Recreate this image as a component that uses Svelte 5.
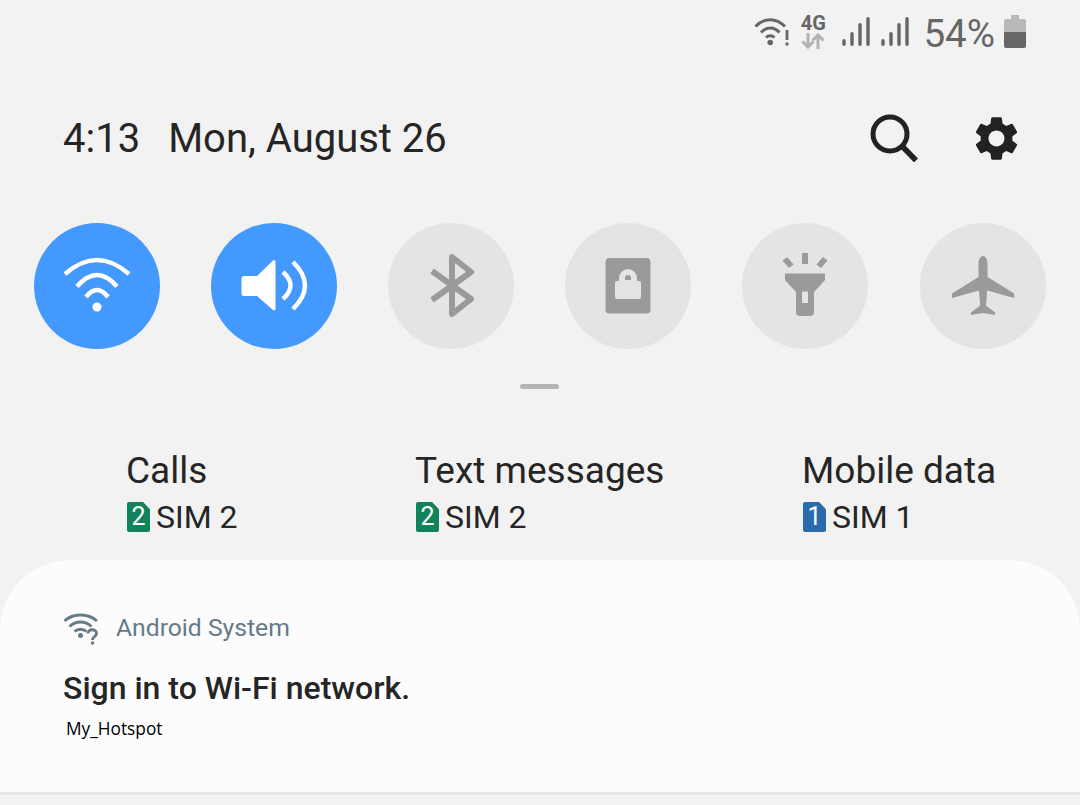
<script>
  const sims = [
    { label: 'Calls', num: 2, color: 'green' },
    { label: 'Text messages', num: 2, color: 'green' },
    { label: 'Mobile data', num: 1, color: 'blue' }
  ];
</script>

<div class="shade">
  <div class="status">
    <svg class="st-wifi" width="36" height="32" viewBox="0 0 36 32">
      <g fill="none" stroke="#666" stroke-width="3">
        <path d="M1.500 11.500C10 2.500 22 2.500 31 11.500" />
        <path d="M7 17.500C12.500 11.500 20 11.500 25.500 17.500" />
        <path d="M12 22.500C14.500 20 18 20 20.500 22.500" />
      </g>
      <circle cx="16.200" cy="27.500" r="2.800" fill="#666" />
      <path d="M33 15v10" stroke="#666" stroke-width="2.800" />
      <circle cx="33" cy="29" r="1.700" fill="#666" />
    </svg>
    <div class="st-net">
      <span>4G</span>
      <svg width="24" height="16" viewBox="0 0 24 16">
        <g fill="none" stroke="#b2b2b2" stroke-width="3">
          <path d="M7 0v14M1.500 8.500L7 14l5.500-5.500" />
          <path d="M17 16V2M11.500 7.500L17 2l5.500 5.500" />
        </g>
      </svg>
    </div>
    <div class="st-bars">
      {#each [0, 1] as s (s)}
        <svg width="28" height="32" viewBox="0 0 28 32">
          <g fill="none" stroke="#666" stroke-width="3.400" stroke-linecap="round">
            <path d="M2 25.700v3.600" />
            <path d="M10 18.700v10.600" />
            <path d="M18 9.700v19.600" />
            <path d="M26 3.700v25.600" />
          </g>
        </svg>
      {/each}
    </div>
    <span class="st-pct">54%</span>
    <svg class="st-batt" width="22" height="33" viewBox="0 0 22 33">
      <path d="M7 0h8v4h5a2 2 0 0 1 2 2v11H0V6a2 2 0 0 1 2-2h5z" fill="#b9b9b9" />
      <path d="M0 17h22v14a2 2 0 0 1-2 2H2a2 2 0 0 1-2-2z" fill="#666" />
    </svg>
  </div>

  <div class="head">
    <div class="when"><span class="time">4:13</span><span>Mon, August 26</span></div>
    <svg class="search" width="48" height="48" viewBox="0 0 48 48">
      <circle cx="20" cy="20" r="17" fill="none" stroke="#222" stroke-width="5" />
      <path d="M32 32l14 14.500" fill="none" stroke="#222" stroke-width="5.500" />
    </svg>
    <svg class="gear" width="53" height="53" viewBox="0 0 24 24">
      <path fill="#222" fill-rule="evenodd" d="M19.140 12.940c.04-.3.06-.61.06-.94 0-.32-.02-.64-.07-.94l2.030-1.580c.18-.14.23-.41.12-.61l-1.920-3.320c-.12-.22-.37-.29-.59-.22l-2.390.96c-.5-.38-1.030-.7-1.620-.94l-.36-2.540c-.04-.24-.24-.41-.48-.41h-3.840c-.24 0-.43.17-.47.41l-.36 2.540c-.59.24-1.130.57-1.620.94l-2.390-.96c-.22-.08-.47 0-.59.22L2.740 8.870c-.12.21-.08.47.12.61l2.030 1.580c-.05.3-.09.63-.09.94s.02.64.07.94l-2.030 1.580c-.18.14-.23.41-.12.61l1.920 3.320c.12.22.37.29.59.22l2.390-.96c.5.38 1.030.7 1.620.94l.36 2.540c.05.24.24.41.48.41h3.840c.24 0 .44-.17.47-.41l.36-2.540c.59-.24 1.130-.56 1.620-.94l2.390.96c.22.08.47 0 .59-.22l1.920-3.320c.12-.22.07-.47-.12-.61l-2.010-1.580zM12 15.600c-1.980 0-3.600-1.620-3.600-3.600s1.620-3.600 3.600-3.600 3.600 1.620 3.600 3.600-1.620 3.600-3.600 3.600z" />
    </svg>
  </div>

  <div class="toggles">
    <div class="tog on">
      <svg viewBox="0 0 126 126">
        <g fill="none" stroke="#fff" stroke-width="4.500">
          <path d="M31 51Q63 23 95 51" />
          <path d="M43 63.500Q63 40.500 83 63.500" />
          <path d="M52 74Q63 60 74 74" />
        </g>
        <circle cx="63" cy="84" r="4.500" fill="#fff" />
      </svg>
    </div>
    <div class="tog on">
      <svg viewBox="0 0 126 126">
        <path d="M33 53h13L62 37.500a1.500 1.500 0 0 1 2.500 1v47.500a1.500 1.500 0 0 1-2.500 1L46 73H33a2.500 2.500 0 0 1-2.500-2.500v-15A2.500 2.500 0 0 1 33 53z" fill="#fff" />
        <g fill="none" stroke="#fff" stroke-width="4.500">
          <path d="M72 49Q87 62.500 72 76" />
          <path d="M82 39Q106 62.500 82 86" />
        </g>
      </svg>
    </div>
    <div class="tog">
      <svg viewBox="0 0 126 126">
        <path d="M44 48L83 76 64 91V34L83 49 44 77" fill="none" stroke="#9a9a9a" stroke-width="6" stroke-linejoin="round" />
      </svg>
    </div>
    <div class="tog">
      <svg viewBox="0 0 126 126">
        <rect x="40.500" y="35" width="45" height="55.500" rx="4" fill="#9a9a9a" />
        <path d="M50 60a2 2 0 0 1 2-2h2v-3a9 9 0 0 1 18 0v3h2a2 2 0 0 1 2 2v14a2 2 0 0 1-2 2H52a2 2 0 0 1-2-2z" fill="#e4e4e4" />
        <path d="M60 57v-2a3 3 0 0 1 6 0v2z" fill="#9a9a9a" />
      </svg>
    </div>
    <div class="tog">
      <svg viewBox="0 0 126 126">
        <path d="M60 30h6v11h-6zM40.500 37.500l4.500-3.500 6.500 7.500-4.500 3.500zM85.500 37.500L81 34l-6.500 7.500 4.500 3.500z" fill="#9a9a9a" />
        <path fill-rule="evenodd" d="M43 50.500h40V57L72 69v20a4 4 0 0 1-4 4H58a4 4 0 0 1-4-4V69L43 57zM60 68.500v11.500h6V68.500z" fill="#9a9a9a" />
      </svg>
    </div>
    <div class="tog">
      <svg viewBox="0 0 126 126">
        <path d="M63 33c-2.800 0-4.500 4-4.500 8v13L32 70.500V75l27-7.500 1.200 15L51 89.500V92l12-2 12 2v-2.500L66 82.500l1.200-15 27 7.500v-4.500L67.500 54V41c0-4-1.700-8-4.500-8z" fill="#9a9a9a" />
      </svg>
    </div>
  </div>

  <div class="handle"></div>

  <div class="sims">
    {#each sims as sim (sim.label)}
      <div class="sim">
        <div class="sim-label">{sim.label}</div>
        <div class="sim-val">
          <span class="badge {sim.color}">{sim.num}</span>
          <span>SIM {sim.num}</span>
        </div>
      </div>
    {/each}
  </div>

  <div class="panel">
    <div class="app">
      <svg width="38" height="34" viewBox="0 0 38 34">
        <g fill="none" stroke="#667a85" stroke-width="2.800">
          <path d="M1.500 10C10 2 25 2 34 10" />
          <path d="M6.500 15.500C13 9.500 22 9.500 28.500 15.500" />
          <path d="M11.500 20.500C15 17.500 20 17.500 23.500 20.500" />
        </g>
        <circle cx="17.500" cy="24.500" r="2.500" fill="#667a85" />
        <path d="M25 22.500c0-5 8.500-5 8.500 0 0 3-4 3-4 6.500" fill="none" stroke="#667a85" stroke-width="2.800" />
        <circle cx="29.500" cy="32" r="1.800" fill="#667a85" />
      </svg>
      <span>Android System</span>
    </div>
    <div class="title">Sign in to Wi-Fi network.</div>
    <div class="sub">My_Hotspot</div>
  </div>
</div>

<style>
  :global(body) {
    margin: 0;
    background: #f2f2f2;
  }
  .shade {
    width: 1080px;
    height: 805px;
    overflow: hidden;
    font-family: Roboto, sans-serif;
    color: #252525;
    background: #f2f2f2;
  }
  .status {
    height: 62px;
    box-sizing: border-box;
    padding: 15px 54px 0 0;
    display: flex;
    justify-content: flex-end;
    align-items: flex-start;
  }
  .st-net {
    width: 24px;
    margin-left: 11px;
    display: flex;
    flex-direction: column;
    align-items: center;
  }
  .st-net span {
    font-size: 20px;
    font-weight: 700;
    line-height: 17px;
    color: #666;
  }
  .st-net svg {
    margin-top: 1px;
  }
  .st-bars {
    display: flex;
    gap: 11px;
    margin-left: 17px;
  }
  .st-pct {
    font-size: 38.600px;
    line-height: 37px;
    color: #666;
    margin-left: 14px;
  }
  .st-batt {
    margin-left: 9px;
  }
  .head {
    display: flex;
    align-items: center;
    height: 58px;
    margin-top: 47px;
    padding-left: 63px;
  }
  .when {
    flex: 1;
    margin-top: 2px;
    font-size: 40px;
    line-height: 58px;
  }
  .time {
    margin-right: 28px;
  }
  .search {
    margin-right: 52px;
  }
  .gear {
    margin-right: 57px;
  }
  .toggles {
    display: flex;
    gap: 51px;
    margin-top: 56px;
    padding-left: 34px;
  }
  .tog {
    width: 126px;
    height: 126px;
    border-radius: 50%;
    background: #e4e4e4;
  }
  .tog:last-child {
    margin-left: 1px;
  }
  .tog.on {
    background: #4499ff;
  }
  .tog svg {
    display: block;
    width: 126px;
    height: 126px;
  }
  .handle {
    width: 39px;
    height: 5px;
    margin: 35px 0 0 520px;
    border-radius: 3px;
    background: #b4b4b4;
  }
  .sims {
    display: flex;
    margin-top: 61px;
    padding-left: 126px;
    height: 110px;
  }
  .sim:nth-child(1) {
    width: 289px;
  }
  .sim:nth-child(2) {
    width: 387px;
  }
  .sim-label {
    font-size: 37px;
    line-height: 42px;
  }
  .sim-val {
    display: flex;
    align-items: center;
    gap: 6px;
    margin: 7px 0 0 1px;
    font-size: 32px;
    line-height: 36px;
  }
  .badge {
    width: 23px;
    height: 30px;
    border-radius: 2px;
    color: #fff;
    font-size: 25px;
    line-height: 30px;
    text-align: center;
    clip-path: polygon(0 0, 70% 0, 100% 24%, 100% 100%, 0 100%);
  }
  .badge.green {
    background: #10835a;
  }
  .badge.blue {
    background: #2a6cab;
  }
  .panel {
    height: 232px;
    background: #fcfcfc;
    border-radius: 70px 70px 0 0;
    border-bottom: 3px solid #e8e8e8;
    padding-left: 63px;
  }
  .app {
    display: flex;
    align-items: center;
    gap: 15px;
    padding-top: 51px;
    font-size: 24.700px;
    line-height: 34px;
    color: #667a85;
  }
  .title {
    margin-top: 24px;
    font-size: 32px;
    font-weight: 500;
    line-height: 38px;
  }
  .sub {
    margin-top: 11px;
    margin-left: 3px;
    font-family: "Open Sans", sans-serif;
    font-size: 17.300px;
    line-height: 22px;
    color: #000;
  }
</style>
